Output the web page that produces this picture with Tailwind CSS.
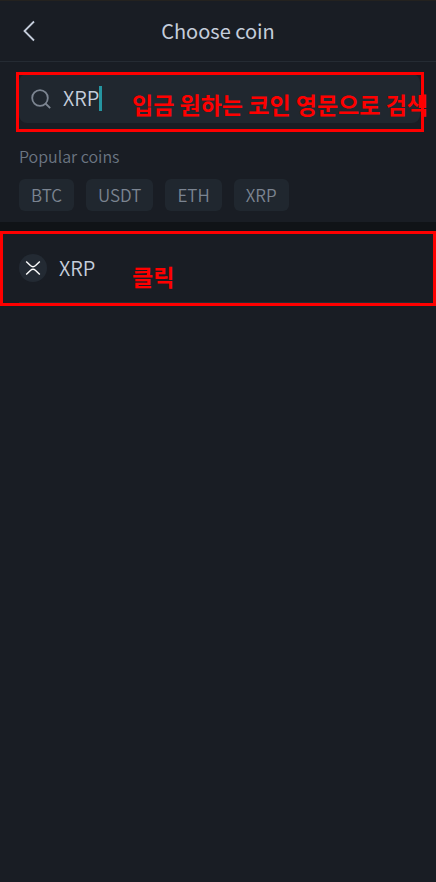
<!DOCTYPE html>
<html lang="en">
<head>
  <meta charset="UTF-8" />
  <meta name="viewport" content="width=device-width, initial-scale=1.0"/>
  <title>Choose coin</title>
  <script src="https://cdn.jsdelivr.net/npm/@tailwindcss/browser@4"></script>
</head>
<body class="bg-[#191d24] min-h-screen font-['Noto_Sans_CJK_KR',sans-serif] text-[#c5cddb] border-t border-[#24221f]">

  <header class="grid grid-cols-[1fr_auto_1fr] items-center h-[61px] px-4 border-b border-[#252b33]">
    <button type="button" aria-label="Back" class="w-7 h-7 flex items-center justify-center">
      <svg class="w-7 h-7" viewBox="0 0 28 28" fill="none" stroke="currentColor" stroke-width="1.8">
        <path d="M18 4.5 8.5 14 18 23.5"/>
      </svg>
    </button>
    <h1 class="text-xl leading-7">Choose coin</h1>
  </header>

  <main>
    <section class="pl-[19px] pr-4 pt-3 pb-[11px]">
      <div class="relative">
        <label class="flex items-center h-[49px] px-3 rounded-lg bg-[#20272f]">
          <svg class="w-5 h-5 mr-3 text-[#7c8591]" viewBox="0 0 20 20" fill="none" stroke="currentColor" stroke-width="1.8">
            <circle cx="9" cy="9" r="7.8"/>
            <path d="M14.5 14.5 19.2 19.2"/>
          </svg>
          <input type="text" value="XRP" aria-label="Search coin" class="field-sizing-content -mt-[2px] text-xl leading-7 font-[350] bg-transparent outline-none"/>
          <span class="w-[3px] h-[25px] bg-[#2595a1]"></span>
        </label>
        <!-- step 1 note -->
        <div class="absolute -left-[3px] -right-1 -top-[2px] h-[60px] border-3 border-[#fe0000]"></div>
        <p class="absolute left-[113px] top-[14px] text-[23px] leading-8 font-bold text-[#fe0000] whitespace-nowrap">입금 원하는 코인 영문으로 검색</p>
      </div>

      <h2 class="mt-[21px] text-base leading-6 font-[350] text-[#6c7683]">Popular coins</h2>
      <div class="flex gap-3 mt-[11px] text-[17px] leading-6 font-[350] text-[#7b8491]">
        <button type="button" class="h-8 px-3 rounded-md bg-[#20272f]">BTC</button>
        <button type="button" class="h-8 px-3 rounded-md bg-[#20272f]">USDT</button>
        <button type="button" class="h-8 px-3 rounded-md bg-[#20272f]">ETH</button>
        <button type="button" class="h-8 px-3 rounded-md bg-[#20272f]">XRP</button>
      </div>
    </section>

    <div class="h-[9px] bg-[#101317]"></div>

    <section class="relative pl-[19px] pr-4">
      <button type="button" class="flex items-center gap-3 w-full h-[72px] pt-[2px] border-b border-[#252b33] text-left">
        <span class="w-7 h-7 rounded-full bg-[#232a33] flex items-center justify-center">
          <svg class="w-4 h-4 text-white" viewBox="0 0 16 16" fill="none" stroke="currentColor" stroke-width="1.4">
            <path d="M1.2 1.5 5.4 5.6Q8 8 10.6 5.6L14.8 1.5"/>
            <path d="M1.2 14.5 5.4 10.4Q8 8 10.6 10.4L14.8 14.5"/>
          </svg>
        </span>
        <span class="text-xl leading-7 font-[350]">XRP</span>
      </button>
      <!-- step 2 note -->
      <div class="absolute inset-x-0 top-0 h-[75px] border-3 border-[#fe0000]"></div>
      <p class="absolute left-[132px] top-[29px] text-[23px] leading-8 font-bold text-[#fe0000]">클릭</p>
    </section>
  </main>

</body>
</html>
